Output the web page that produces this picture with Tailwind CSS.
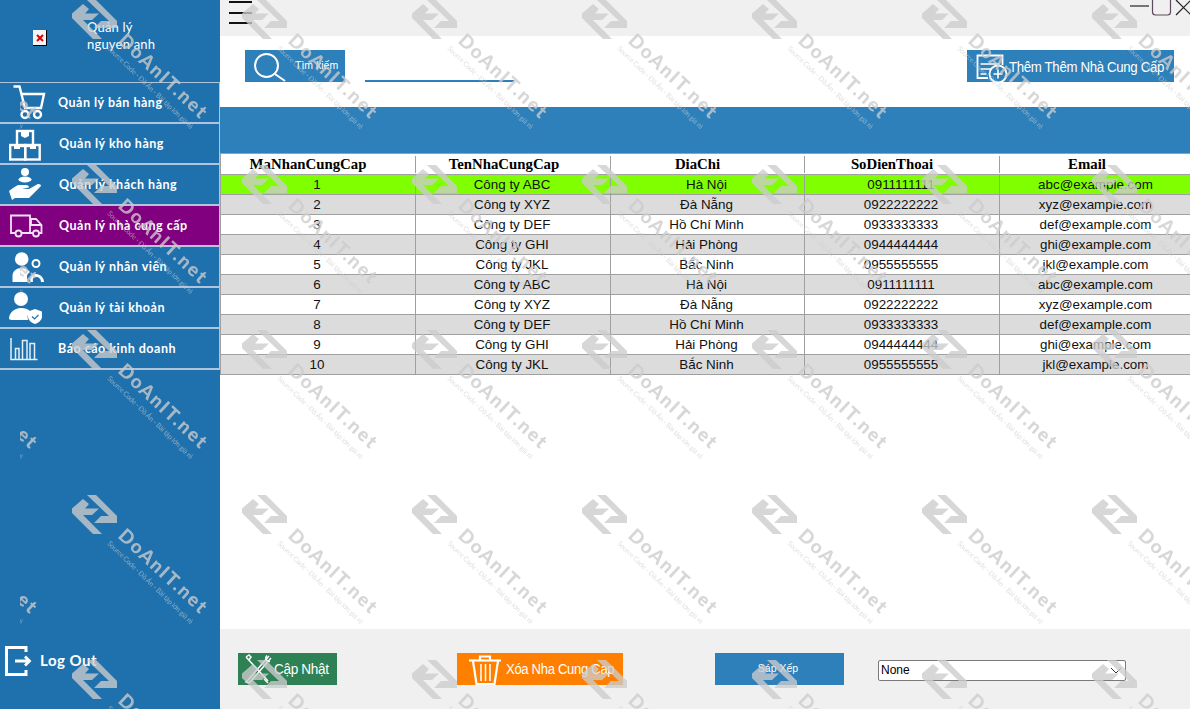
<!DOCTYPE html>
<html lang="vi">
<head>
<meta charset="utf-8">
<title>Quản lý nhà cung cấp</title>
<script src="https://cdn.jsdelivr.net/npm/@tailwindcss/browser@4"></script>
</head>
<body class="m-0 overflow-hidden bg-white">
<div class="relative flex w-[1190px] h-[709px] overflow-hidden font-['Liberation_Sans',sans-serif]">

  <!-- SIDEBAR -->
  <aside class="flex flex-col w-[220px] h-full bg-[#1f71ae] text-white font-['Lato',sans-serif]">
    <div class="flex h-[83px] border-b border-[#b0c4de] shrink-0">
      <div class="ml-[33px] mt-[30px] w-[14px] h-[16px] bg-[#f4f4f4] border-r border-b border-black flex items-center justify-center">
        <svg width="8" height="8" viewBox="0 0 8 8"><path d="M1 1l6 6M7 1l-6 6" stroke="#e00000" stroke-width="2"/></svg>
      </div>
      <div class="ml-[40px] mt-[19px] text-[13px] leading-[17px] font-normal tracking-[0.2px]">
        <div>Quản lý</div>
        <div>nguyen anh</div>
      </div>
    </div>

    <nav class="flex flex-col text-[12.500px] font-bold tracking-[0.5px] [&_span]:pt-[2px]">
      <a class="flex items-center h-[41px] border-b-2 border-r border-[#b0c4de] pr-0">
        <svg class="w-[58px] h-[39px] shrink-0" viewBox="0 83 58 39" fill="none" stroke="#fff" stroke-width="2.4">
          <path d="M13.500 86.500H19.500L25 108H41L44 94H21.500"/>
          <circle cx="25" cy="114.500" r="3.500"/><circle cx="37.500" cy="114.500" r="3.500"/>
        </svg>
        <span>Quản lý bán hàng</span>
      </a>
      <a class="flex items-center h-[41px] border-b-2 border-r border-[#b0c4de]">
        <svg class="w-[59px] h-[39px] shrink-0" viewBox="0 124 59 39" fill="none" stroke="#fff" stroke-width="2.4">
          <rect x="17" y="131" width="16" height="15"/>
          <rect x="10.200" y="145" width="15" height="14.500"/><rect x="25.200" y="145" width="14.500" height="14.500"/>
          <path d="M21 131h8v5l-4 2-4-2zM14 145h6v4h-6zM30 145h6v4h-6z" fill="#fff" stroke="none"/>
        </svg>
        <span>Quản lý kho hàng</span>
      </a>
      <a class="flex items-center h-[41px] border-b-2 border-r border-[#b0c4de]">
        <svg class="w-[59px] h-[39px] shrink-0" viewBox="0 165 59 39" fill="#fff">
          <circle cx="25" cy="172" r="4"/><ellipse cx="25" cy="179.500" rx="6.500" ry="3"/>
          <path d="M9 191l4-3 5-3h8c2 0 3 1 3 2.500l-7 1.200 7 .3 8-4.500c2-1 4 0 4 1.500l-9 9-3 3H15l-3 2z"/>
        </svg>
        <span>Quản lý khách hàng</span>
      </a>
      <a class="flex items-center h-[41px] border-b-2 border-r border-[#b0c4de] bg-[#800080]">
        <svg class="w-[59px] h-[39px] shrink-0" viewBox="0 206 59 39" fill="none" stroke="#f3e2f3" stroke-width="1.800">
          <path d="M15 233H11V215.500H30V233H22M30 219h6l5.500 6v8H39M33 233h-3"/>
          <path d="M31 219v6h10"/>
          <circle cx="18.500" cy="233.500" r="3"/><circle cx="36" cy="233.500" r="3"/>
        </svg>
        <span>Quản lý nhà cung cấp</span>
      </a>
      <a class="flex items-center h-[41px] border-b-2 border-r border-[#b0c4de]">
        <svg class="w-[59px] h-[39px] shrink-0" viewBox="0 247 59 39" fill="#fff">
          <circle cx="21.700" cy="259" r="6.800"/>
          <path d="M12.500 282v-6c0-5 4-8 9-8 4 0 7 2 8.500 4-2 1-3 3-3 4.500 0 2 0 4 1 5.500z"/>
          <circle cx="36" cy="263.500" r="3.500" fill="none" stroke="#fff" stroke-width="2"/>
          <path d="M30.500 282c-1-5 1-8 5.500-8s8 4 8 8h-3c0-3-2-5-5-5s-3.500 2-3 5z"/>
        </svg>
        <span>Quản lý nhân viên</span>
      </a>
      <a class="flex items-center h-[41px] border-b-2 border-r border-[#b0c4de]">
        <svg class="w-[59px] h-[39px] shrink-0" viewBox="0 288 59 39" fill="#fff">
          <circle cx="21" cy="299" r="7"/>
          <path d="M9 319c0-6 5-11 12-11 4 0 7 1 9 3-2 2-3 5-2 9H11z"/>
          <path d="M35 309l7 2.500v5c0 4-4 6.500-7 7.500-3-1-7-3.500-7-7.500v-5z"/>
          <path d="M32 316.500l2.500 2.500 4-4" stroke="#1f71ae" stroke-width="1.200" fill="none"/>
        </svg>
        <span>Quản lý tài khoản</span>
      </a>
      <a class="flex items-center h-[41px] border-b-2 border-r border-[#b0c4de]">
        <svg class="w-[58px] h-[39px] shrink-0" viewBox="0 329 58 39" fill="none" stroke="#e3eff7" stroke-width="1.500">
          <path d="M11 338v21.500h26.500"/>
          <path d="M15.500 359v-10.500h3.500V359M22.500 359v-18.500h4.500V359M30 359v-15.500h4.500V359"/>
        </svg>
        <span>Báo cáo kinh doanh</span>
      </a>
    </nav>

    <div class="mt-auto mb-[33px] flex items-center h-[32px]">
      <svg class="w-[40px] h-[32px] shrink-0" viewBox="0 644 40 32" fill="none" stroke="#fff" stroke-width="3">
        <path d="M26 652v-4.500H6.500v27H26v-4.500"/>
        <path d="M15 661h14M25 656.500l4.500 4.500-4.500 4.500" stroke-width="2.800"/>
      </svg>
      <span class="text-[15px] font-bold tracking-[0.5px]">Log Out</span>
    </div>
  </aside>

  <!-- MAIN -->
  <main class="flex flex-col flex-1 min-w-0 h-full">
    <header class="relative flex h-[36px] bg-[#f0f0f0] shrink-0">
      <svg class="ml-[9px] w-[24px] h-[26px]" viewBox="0 0 24 26" fill="none" stroke="#111" stroke-width="2"><path d="M0 2h23M0 13h23M0 23h23"/></svg>
      <svg class="absolute right-0 top-0 w-[60px] h-[20px]" viewBox="1130 0 60 20" fill="none" stroke="#222" stroke-width="1.200">
        <path d="M1130 6h19"/>
        <rect x="1152.500" y="-4" width="18" height="19" rx="3" stroke="#5c4a5c"/>
        <path d="M1176 0l15 15M1191 0l-15 15"/>
      </svg>
    </header>

    <section class="relative flex items-start h-[71px] bg-white shrink-0 pt-[14px]">
      <button class="flex items-center ml-[25px] w-[100px] h-[32px] bg-[#2e80ba] text-white text-[10.500px]">
        <svg class="ml-[7px] w-[36px] h-[32px] shrink-0" viewBox="0 0 36 32" fill="none" stroke="#fff" stroke-width="2">
          <circle cx="14.500" cy="15.500" r="11.500"/><path d="M23 24l10 7"/>
        </svg>
        <span class="ml-[7px]">Tìm kiếm</span>
      </button>
      <div class="ml-[20px] mt-[30px] w-[149px] h-[2px] bg-[#2e80ba]"></div>
      <button class="flex items-center ml-auto mr-[16px] w-[207px] h-[32px] bg-[#2e80ba] text-white text-[14px] tracking-[-0.35px] whitespace-nowrap">
        <svg class="ml-[9px] w-[33px] h-[32px] shrink-0" viewBox="0 0 33 32" fill="none" stroke="#fff" stroke-width="1.800">
          <path d="M12 28H1.500V5.500h25V15"/>
          <path d="M4.500 14h19M4.500 19h14M4.500 24h6" stroke-width="1.500"/>
          <circle cx="22" cy="24" r="8.500" fill="#2e80ba"/>
          <path d="M17.500 24h9M22 19.500v9" stroke-width="1.600"/>
        </svg>
        <span class="inline-block origin-left scale-x-[0.945] pt-[2px]">Thêm Thêm Nhà Cung Cấp</span>
      </button>
    </section>

    <div class="h-[46px] bg-[#2e80ba] shrink-0"></div>

    <section class="flex-1 bg-white overflow-hidden min-h-0">
      <table class="table-fixed border-separate border-spacing-0 w-[972px] text-[13.400px] text-[#111]">
        <colgroup>
          <col class="w-[196px]"><col class="w-[195px]"><col class="w-[194px]"><col class="w-[195px]"><col class="w-[192px]">
        </colgroup>
        <thead class="font-['Liberation_Serif',serif] text-[14.800px] text-black">
          <tr class="[&>th]:h-[22px] [&>th]:p-0 [&>th]:align-top [&>th]:border-t [&>th]:border-b [&>th]:border-[#a0a0a0] [&>th]:font-bold">
            <th class="border-l"><div class="mt-[2px] h-[17px] flex items-center justify-center border-r border-[#a0a0a0] pr-[20px]">MaNhanCungCap</div></th>
            <th><div class="mt-[2px] h-[17px] flex items-center justify-center border-r border-[#a0a0a0] pr-[18px]">TenNhaCungCap</div></th>
            <th><div class="mt-[2px] h-[17px] flex items-center justify-center border-r border-[#a0a0a0] pr-[20px]">DiaChi</div></th>
            <th><div class="mt-[2px] h-[17px] flex items-center justify-center border-r border-[#a0a0a0] pr-[20px]">SoDienThoai</div></th>
            <th><div class="mt-[2px] h-[17px] flex items-center justify-center pr-[18px]">Email</div></th>
          </tr>
        </thead>
        <tbody class="text-center [&_td]:h-[20px] [&_td]:p-0 [&_td]:leading-[19px] [&_td]:border-b [&_td]:border-r [&_td]:border-[#a0a0a0] [&_td:first-child]:border-l [&_td:not(:last-child)]:pr-[2px]">
          <tr class="bg-[#7fff00]"><td>1</td><td>Công ty ABC</td><td>Hà Nội</td><td>0911111111</td><td>abc@example.com</td></tr>
          <tr class="bg-[#dcdcdc]"><td>2</td><td>Công ty XYZ</td><td>Đà Nẵng</td><td>0922222222</td><td>xyz@example.com</td></tr>
          <tr><td>3</td><td>Công ty DEF</td><td>Hồ Chí Minh</td><td>0933333333</td><td>def@example.com</td></tr>
          <tr class="bg-[#dcdcdc]"><td>4</td><td>Công ty GHI</td><td>Hải Phòng</td><td>0944444444</td><td>ghi@example.com</td></tr>
          <tr><td>5</td><td>Công ty JKL</td><td>Bắc Ninh</td><td>0955555555</td><td>jkl@example.com</td></tr>
          <tr class="bg-[#dcdcdc]"><td>6</td><td>Công ty ABC</td><td>Hà Nội</td><td>0911111111</td><td>abc@example.com</td></tr>
          <tr><td>7</td><td>Công ty XYZ</td><td>Đà Nẵng</td><td>0922222222</td><td>xyz@example.com</td></tr>
          <tr class="bg-[#dcdcdc]"><td>8</td><td>Công ty DEF</td><td>Hồ Chí Minh</td><td>0933333333</td><td>def@example.com</td></tr>
          <tr><td>9</td><td>Công ty GHI</td><td>Hải Phòng</td><td>0944444444</td><td>ghi@example.com</td></tr>
          <tr class="bg-[#dcdcdc]"><td>10</td><td>Công ty JKL</td><td>Bắc Ninh</td><td>0955555555</td><td>jkl@example.com</td></tr>
        </tbody>
      </table>
    </section>

    <footer class="flex items-start h-[80px] bg-[#f0f0f0] shrink-0 pt-[24px]">
      <button class="flex items-center ml-[18px] w-[99px] h-[32px] bg-[#2e8055] text-white text-[14px] tracking-[-0.35px]">
        <svg class="ml-[5px] w-[31px] h-[32px] shrink-0" viewBox="0 0 31 32" fill="none" stroke="#fff" stroke-width="1.500">
          <path d="M3 4l22 24M3 4l3-2 2 2-2 3"/>
          <path d="M26 3l-21 24-2 2 3 1 2-2 20-23"/>
          <path d="M24 2.500a3.500 3.500 0 0 0 3 6 M21 26l4 4"/>
        </svg>
        <span class="inline-block origin-left scale-x-[0.97]">Cập Nhật</span>
      </button>
      <button class="flex items-center ml-[120px] w-[166px] h-[32px] bg-[#ff8000] text-white text-[14px] tracking-[-0.35px] whitespace-nowrap">
        <svg class="ml-[12px] w-[33px] h-[32px] shrink-0" viewBox="0 0 33 32" fill="none" stroke="#fff" stroke-width="2.200">
          <path d="M0 7.500h32"/><path d="M11 7V3.500h10V7"/>
          <path d="M4 8l3.500 23h18L29 8"/>
          <path d="M12 11v17M16.500 11v17M21 11v17" stroke-width="1.500"/>
        </svg>
        <span class="ml-[4px] inline-block origin-left scale-x-[0.935]">Xóa Nha Cung Cap</span>
      </button>
      <button class="ml-[92px] w-[129px] h-[32px] bg-[#2e80ba] text-white text-[10.500px] pr-[3px] flex items-center justify-center">Sáp Xếp</button>
      <div class="ml-[34px] mt-[7px] flex items-center w-[248px] h-[21px] bg-white border border-[#7a7a7a] rounded-[2px] text-[12px] text-black pl-[2px]">
        <span class="pb-[1px]">None</span>
        <svg class="ml-auto mr-[3px] w-[12px] h-[7px]" viewBox="0 0 12 7" fill="none" stroke="#333"><path d="M1 1l5 5 5-5"/></svg>
      </div>
    </footer>
  </main>

  <!-- WATERMARK OVERLAY -->
  <svg class="absolute left-[20px] top-0 w-[1170px] h-[709px] pointer-events-none" viewBox="0 0 1170 709" aria-hidden="true">
    <defs>
      <pattern id="wm" x="52" y="0" width="170" height="165" patternUnits="userSpaceOnUse">
        <g fill="#cccccc" fill-opacity="0.78">
          <path d="M15 0H24L45 21V28H22L29 21H37Z"/>
          <path d="M0 13.500L11 4L17 9L13 13.500H27L20 20H11L30 39H21L0 18Z"/>
          <text transform="translate(45 42) rotate(43)" font-family="Lato, sans-serif" font-weight="900" font-size="19" textLength="113" lengthAdjust="spacing">DoAnIT.net</text>
          <text transform="translate(35 49) rotate(44)" fill-opacity="0.6" font-family="Lato, sans-serif" font-size="7" textLength="116" lengthAdjust="spacing">Source Code - Đồ Án - Bài tập lớn giá rẻ</text>
        </g>
      </pattern>
    </defs>
    <rect width="1170" height="709" fill="url(#wm)"/>
  </svg>
</div>
</body>
</html>
